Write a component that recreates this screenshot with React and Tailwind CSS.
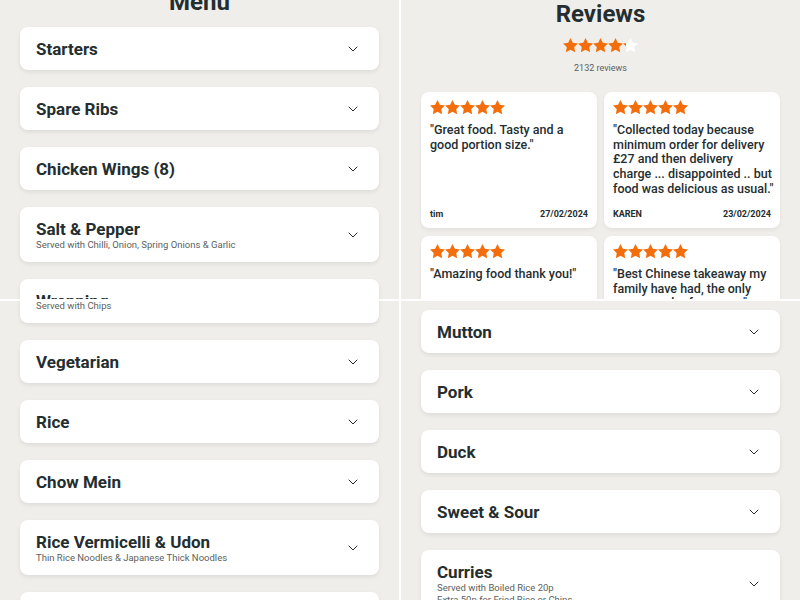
import { ChevronDown } from 'lucide-react';

const STAR = "M12 2l3.09 6.26L22 9.27l-5 4.87 1.18 6.88L12 17.77l-6.18 3.25L7 14.14 2 9.27l6.91-1.01L12 2z";

const Star = ({ size = 15, fill = 1 }) => {
  const id = `clip-${Math.round(fill * 100)}`;
  return (
    <svg width={size} height={size} viewBox="2 2 20 20">
      <defs>
        <clipPath id={id}>
          <rect x="2" y="2" width={20 * fill} height="20" />
        </clipPath>
      </defs>
      <path d={STAR} fill="#ffffff" />
      <path d={STAR} fill="#f36d0a" clipPath={`url(#${id})`} />
    </svg>
  );
};

const MenuCard = ({ title, sub = [] }) => {
  const h = sub.length === 0 ? 'h-[43px]' : sub.length === 1 ? 'h-[55px]' : 'h-[68px]';
  return (
    <div className={`${h} shrink-0 bg-white rounded-lg shadow-[0_2px_4px_rgba(0,0,0,0.08)] flex items-center justify-between pl-4 pr-[18px]`}>
      <div className="flex flex-col">
        <span className="text-[17px] leading-[20px] font-bold text-[#242e30]">{title}</span>
        {sub.map((s) => (
          <span key={s} className="text-[9.5px] leading-[12px] text-[#5b5f60]">{s}</span>
        ))}
      </div>
      <ChevronDown size={16} strokeWidth={1.5} className="text-[#242e30]" />
    </div>
  );
};

// lines kept as in the source layout
const ReviewCard = ({ lines, name, date }) => (
  <div className="h-[136px] bg-white rounded-lg shadow-[0_2px_4px_rgba(0,0,0,0.06)] flex flex-col px-[9px] pt-[8px] pb-[8px]">
    <div className="flex">
      {[0, 1, 2, 3, 4].map((i) => <Star key={i} size={15} />)}
    </div>
    <p className="mt-[8px] text-[12.5px] leading-[14.7px] font-medium text-[#242e30]">
      {lines.map((l) => (
        <span key={l} className="block whitespace-nowrap">{l}</span>
      ))}
    </p>
    <div className="mt-auto flex justify-between text-[9px] leading-[12px] font-bold text-[#242e30]">
      <span>{name}</span>
      <span>{date}</span>
    </div>
  </div>
);

export default function App() {
  return (
    <div className="w-[800px] h-[600px] bg-white grid grid-cols-[399px_399px] grid-rows-[299px_299px] gap-[2px] overflow-hidden" style={{ fontFamily: 'Roboto, "Noto Sans", Arial, sans-serif' }}>
      {/* top left: menu */}
      <div className="overflow-hidden bg-[#efeeeb] px-5">
        <h2 className="-mt-[12px] h-[28px] text-center text-[24px] leading-[28px] font-bold text-[#242e30]">Menu</h2>
        <div className="mt-[11px] flex flex-col gap-[17px]">
          <MenuCard title="Starters" />
          <MenuCard title="Spare Ribs" />
          <MenuCard title="Chicken Wings (8)" />
          <MenuCard title="Salt & Pepper" sub={["Served with Chilli, Onion, Spring Onions & Garlic"]} />
          <MenuCard title="Wrapping" sub={["Served with Chips"]} />
        </div>
      </div>

      {/* top right: reviews */}
      <div className="overflow-hidden bg-[#efeeeb] px-5">
        <h2 className="h-[28px] text-center text-[24px] leading-[28px] font-bold text-[#242e30]">Reviews</h2>
        <div className="mt-[10px] flex justify-center">
          <Star size={15} />
          <Star size={15} />
          <Star size={15} />
          <Star size={15} />
          <Star size={15} fill={0.2} />
        </div>
        <p className="mt-[9px] text-center text-[9px] leading-[12px] text-[#5b5f60]">2132 reviews</p>
        <div className="mt-[18px] grid grid-cols-2 gap-x-[7px] gap-y-[8px]">
          <ReviewCard lines={['"Great food. Tasty and a', 'good portion size."']} name="tim" date="27/02/2024" />
          <ReviewCard
            lines={['"Collected today because', 'minimum order for delivery', '£27 and then delivery', 'charge ... disappointed .. but', 'food was delicious as usual."']}
            name="KAREN"
            date="23/02/2024"
          />
          <ReviewCard lines={['"Amazing food thank you!"']} name="Sam" date="21/02/2024" />
          <ReviewCard lines={['"Best Chinese takeaway my', 'family have had, the only', 'one we order from now."']} name="Lee" date="20/02/2024" />
        </div>
      </div>

      {/* bottom left: menu scrolled */}
      <div className="overflow-hidden bg-[#efeeeb] px-5">
        <div className="-mt-[33px] flex flex-col gap-[17px]">
          <MenuCard title="Wrapping" sub={["Served with Chips"]} />
          <MenuCard title="Vegetarian" />
          <MenuCard title="Rice" />
          <MenuCard title="Chow Mein" />
          <MenuCard title="Rice Vermicelli & Udon" sub={["Thin Rice Noodles & Japanese Thick Noodles"]} />
          <MenuCard title="Soup" />
        </div>
      </div>

      {/* bottom right: menu scrolled further */}
      <div className="overflow-hidden bg-[#efeeeb] px-5">
        <div className="mt-[9px] flex flex-col gap-[17px]">
          <MenuCard title="Mutton" />
          <MenuCard title="Pork" />
          <MenuCard title="Duck" />
          <MenuCard title="Sweet & Sour" />
          <MenuCard title="Curries" sub={["Served with Boiled Rice 20p", "Extra 50p for Fried Rice or Chips"]} />
        </div>
      </div>
    </div>
  );
}
